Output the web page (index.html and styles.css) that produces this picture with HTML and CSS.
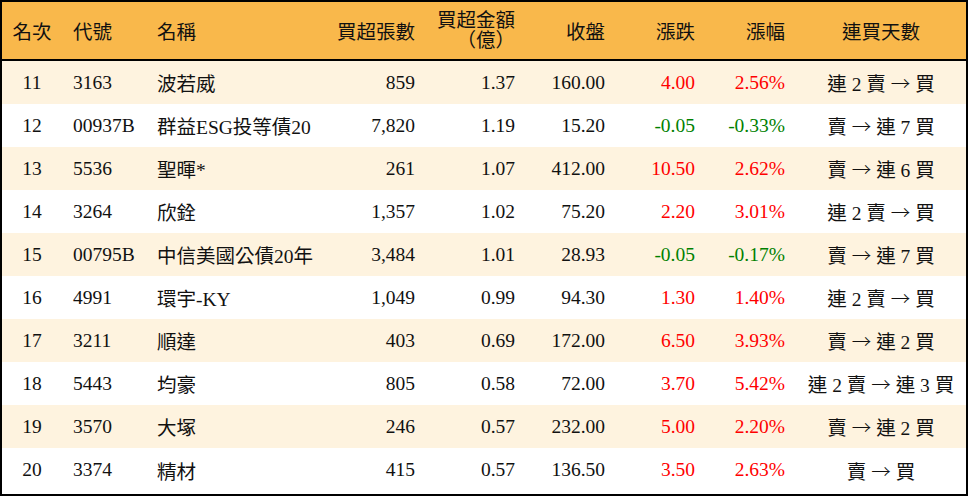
FILE: index.html
```html
<!DOCTYPE html>
<html lang="zh-Hant">
<head>
<meta charset="utf-8">
<title>買超排行</title>
<link rel="stylesheet" href="styles.css">
</head>
<body>
<div class="frame">
<table class="rank">
  <colgroup>
    <col class="c-rank"><col class="c-code"><col class="c-name"><col class="c-vol"><col class="c-amt"><col class="c-close"><col class="c-chg"><col class="c-pct"><col class="c-days">
  </colgroup>
  <thead>
    <tr>
      <th class="ctr">名次</th>
      <th class="lft">代號</th>
      <th class="lft">名稱</th>
      <th class="rgt">買超張數</th>
      <th class="rgt two">買超金額<br>（億）</th>
      <th class="rgt">收盤</th>
      <th class="rgt">漲跌</th>
      <th class="rgt">漲幅</th>
      <th class="ctr">連買天數</th>
    </tr>
  </thead>
  <tbody>
    <tr class="alt"><td class="ctr">11</td><td class="lft">3163</td><td class="lft">波若威</td><td class="rgt">859</td><td class="rgt">1.37</td><td class="rgt">160.00</td><td class="rgt up">4.00</td><td class="rgt up">2.56%</td><td class="ctr">連 2 賣 <span class="arr">→</span> 買</td></tr>
    <tr><td class="ctr">12</td><td class="lft">00937B</td><td class="lft">群益ESG投等債20</td><td class="rgt">7,820</td><td class="rgt">1.19</td><td class="rgt">15.20</td><td class="rgt dn">-0.05</td><td class="rgt dn">-0.33%</td><td class="ctr">賣 <span class="arr">→</span> 連 7 買</td></tr>
    <tr class="alt"><td class="ctr">13</td><td class="lft">5536</td><td class="lft">聖暉*</td><td class="rgt">261</td><td class="rgt">1.07</td><td class="rgt">412.00</td><td class="rgt up">10.50</td><td class="rgt up">2.62%</td><td class="ctr">賣 <span class="arr">→</span> 連 6 買</td></tr>
    <tr><td class="ctr">14</td><td class="lft">3264</td><td class="lft">欣銓</td><td class="rgt">1,357</td><td class="rgt">1.02</td><td class="rgt">75.20</td><td class="rgt up">2.20</td><td class="rgt up">3.01%</td><td class="ctr">連 2 賣 <span class="arr">→</span> 買</td></tr>
    <tr class="alt"><td class="ctr">15</td><td class="lft">00795B</td><td class="lft">中信美國公債20年</td><td class="rgt">3,484</td><td class="rgt">1.01</td><td class="rgt">28.93</td><td class="rgt dn">-0.05</td><td class="rgt dn">-0.17%</td><td class="ctr">賣 <span class="arr">→</span> 連 7 買</td></tr>
    <tr><td class="ctr">16</td><td class="lft">4991</td><td class="lft">環宇-KY</td><td class="rgt">1,049</td><td class="rgt">0.99</td><td class="rgt">94.30</td><td class="rgt up">1.30</td><td class="rgt up">1.40%</td><td class="ctr">連 2 賣 <span class="arr">→</span> 買</td></tr>
    <tr class="alt"><td class="ctr">17</td><td class="lft">3211</td><td class="lft">順達</td><td class="rgt">403</td><td class="rgt">0.69</td><td class="rgt">172.00</td><td class="rgt up">6.50</td><td class="rgt up">3.93%</td><td class="ctr">賣 <span class="arr">→</span> 連 2 買</td></tr>
    <tr><td class="ctr">18</td><td class="lft">5443</td><td class="lft">均豪</td><td class="rgt">805</td><td class="rgt">0.58</td><td class="rgt">72.00</td><td class="rgt up">3.70</td><td class="rgt up">5.42%</td><td class="ctr">連 2 賣 <span class="arr">→</span> 連 3 買</td></tr>
    <tr class="alt"><td class="ctr">19</td><td class="lft">3570</td><td class="lft">大塚</td><td class="rgt">246</td><td class="rgt">0.57</td><td class="rgt">232.00</td><td class="rgt up">5.00</td><td class="rgt up">2.20%</td><td class="ctr">賣 <span class="arr">→</span> 連 2 買</td></tr>
    <tr class="last"><td class="ctr">20</td><td class="lft">3374</td><td class="lft">精材</td><td class="rgt">415</td><td class="rgt">0.57</td><td class="rgt">136.50</td><td class="rgt up">3.50</td><td class="rgt up">2.63%</td><td class="ctr">賣 <span class="arr">→</span> 買</td></tr>
  </tbody>
</table>
</div>
</body>
</html>
```
FILE: styles.css
```css
html, body {
  margin: 0;
  padding: 0;
  background: #ffffff;
}

.frame {
  width: 968px;
  height: 496px;
  box-sizing: border-box;
  border: 2px solid #000000;
  overflow: hidden;
}

.rank {
  width: 964px;
  table-layout: fixed;
  border-collapse: separate;
  border-spacing: 0;
  font-family: "Liberation Serif", "Noto Sans CJK TC", serif;
  font-size: 19.5px;
  color: #111111;
}

.c-rank { width: 60px; }
.c-code { width: 84px; }
.c-name { width: 180px; }
.c-vol { width: 100px; }
.c-amt { width: 100px; }
.c-close { width: 90px; }
.c-chg { width: 90px; }
.c-pct { width: 90px; }
.c-days { width: 170px; }

.rank th {
  background: #f9b84b;
  font-weight: normal;
  height: 59px;
  padding: 0 11px;
  border-bottom: 2px solid #000000;
  box-sizing: border-box;
  white-space: nowrap;
  vertical-align: middle;
}

.rank th.two {
  line-height: 19.5px;
}

.rank td {
  height: 43px;
  padding: 0 11px;
  box-sizing: border-box;
  white-space: nowrap;
  vertical-align: middle;
}

.rank tr.last td {
  height: 44px;
}

.rank tr.alt td {
  background: #fef3df;
}

.arr {
  font-family: "Noto Sans CJK TC", "DejaVu Sans", sans-serif;
  font-weight: 300;
}

.ctr { text-align: center; }
.lft { text-align: left; }
.rgt { text-align: right; }

.rank th.ctr, .rank td.ctr { padding: 0; }

.up { color: #ff0000; }
.dn { color: #008000; }
```
